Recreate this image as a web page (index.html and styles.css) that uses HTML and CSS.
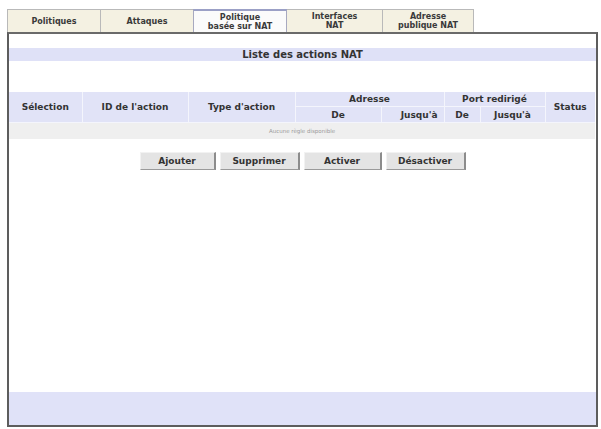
FILE: index.html
```html
<!DOCTYPE html>
<html lang="fr">
<head>
<meta charset="utf-8">
<title>Liste des actions NAT</title>
<link rel="stylesheet" href="styles.css">
</head>
<body>
<div class="tabs">
  <div class="tab t1">Politiques</div>
  <div class="tab t2">Attaques</div>
  <div class="tab t3 active">Politique<br>basée sur NAT</div>
  <div class="tab t4">Interfaces<br>NAT</div>
  <div class="tab t5">Adresse<br>publique NAT</div>
</div>
<div class="panel">
  <div class="title">Liste des actions NAT</div>
  <table class="grid">
    <colgroup>
      <col class="c-sel"><col class="c-id"><col class="c-type"><col class="c-de"><col class="c-jq"><col class="c-pde"><col class="c-pjq"><col class="c-st">
    </colgroup>
    <thead>
      <tr class="r1">
        <th rowspan="2">Sélection</th>
        <th rowspan="2">ID de l'action</th>
        <th rowspan="2">Type d'action</th>
        <th colspan="2">Adresse</th>
        <th colspan="2">Port redirigé</th>
        <th rowspan="2" class="last">Status</th>
      </tr>
      <tr class="r2">
        <th>De</th>
        <th class="right">Jusqu'à</th>
        <th>De</th>
        <th>Jusqu'à</th>
      </tr>
    </thead>
    <tbody>
      <tr class="empty"><td colspan="8">Aucune règle disponible</td></tr>
    </tbody>
  </table>
  <div class="actions">
    <button class="btn b1">Ajouter</button>
    <button class="btn b2">Supprimer</button>
    <button class="btn b3">Activer</button>
    <button class="btn b4">Désactiver</button>
  </div>
  <div class="footer"></div>
</div>
</body>
</html>
```
FILE: styles.css
```css
html, body {
  margin: 0;
  padding: 0;
  background: #ffffff;
}
body {
  width: 601px;
  height: 429px;
  overflow: hidden;
  font-family: "DejaVu Sans", Verdana, sans-serif;
  color: #333333;
}
.tabs {
  display: flex;
  margin: 9px 0 0 7px;
  height: 23px;
}
.tab {
  box-sizing: border-box;
  height: 23px;
  background: #f4f1e2;
  border-top: 1px solid #b9b9b9;
  border-left: 1px solid #b9b9b9;
  font-size: 8px;
  font-weight: bold;
  line-height: 9px;
  text-align: center;
  display: flex;
  align-items: center;
  justify-content: center;
  color: #3a3a3a;
}
.t1 { width: 93px; }
.t2 { width: 93px; }
.t3 { width: 94px; }
.t4 { width: 95px; }
.t5 { width: 92px; border-right: 1px solid #b9b9b9; }
.tab.active {
  background: #fbfbfb;
  border-top: 2px solid #9ba0c6;
  border-left: 1px solid #a7a9c0;
  border-right: 1px solid #a7a9c0;
}
.t4 { border-left: none; }
.panel {
  box-sizing: border-box;
  margin-left: 7px;
  width: 591px;
  height: 395px;
  border: 2px solid #5d5d5d;
  border-top: 2px solid #6a6a6a;
  display: flex;
  flex-direction: column;
  background: #ffffff;
}
.title {
  margin-top: 14px;
  height: 13px;
  background: #dfe1f7;
  font-size: 10px;
  font-weight: bold;
  line-height: 13px;
  text-align: center;
  color: #333;
}
.grid {
  margin-top: 31px;
  width: 586px;
  border-collapse: collapse;
  table-layout: fixed;
}
.c-sel { width: 73px; }
.c-id { width: 106px; }
.c-type { width: 107px; }
.c-de { width: 86px; }
.c-jq { width: 63px; }
.c-pde { width: 36px; }
.c-pjq { width: 65px; }
.c-st { width: 50px; }
.grid th {
  background: #e1e3f7;
  font-size: 9px;
  font-weight: bold;
  color: #333;
  padding: 0;
  border-right: 1px solid #f4f5fc;
  border-bottom: 1px solid #f4f5fc;
  text-align: center;
}
.grid th.last { border-right: none; }
.grid .r1 th { height: 14px; }
.grid .r2 th { height: 15px; }
.grid th.right { text-align: right; padding-right: 6px; }
.empty td {
  height: 16px;
  padding: 0;
  background: #efefef;
  font-size: 5.5px;
  color: #9a9a9a;
  text-align: center;
}
.actions {
  margin-top: 13px;
  display: flex;
  justify-content: center;
  gap: 4px;
}
.btn {
  box-sizing: border-box;
  height: 18px;
  padding: 0 10px;
  margin: 0;
  font-family: "DejaVu Sans", Verdana, sans-serif;
  font-size: 9px;
  font-weight: bold;
  color: #333;
  background: #e4e4e4;
  border: none;
  border-top: 1px solid #f2f2f2;
  border-left: 1px solid #f2f2f2;
  border-right: 2px solid #8c8c8c;
  border-bottom: 1px solid #9a9a9a;
  border-radius: 0;
}
.b1 { width: 76px; }
.b2 { width: 80px; }
.b3 { width: 78px; }
.b4 { width: 80px; }
.footer {
  margin-top: auto;
  height: 33px;
  background: #e0e2f8;
}
```
